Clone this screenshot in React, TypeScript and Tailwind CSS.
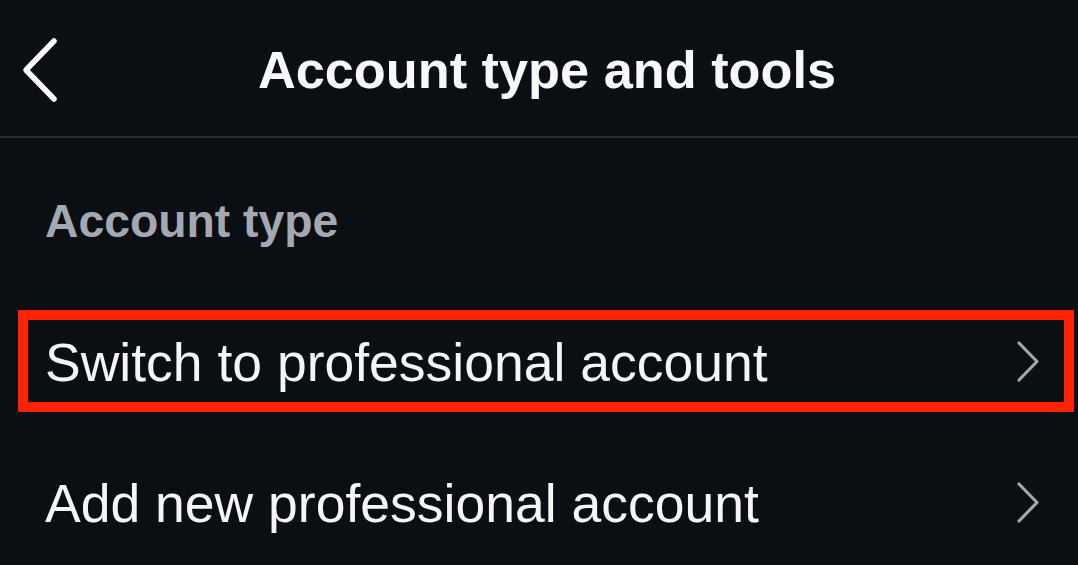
import React from "react";

function ChevronRight() {
  return (
    <svg width="26" height="43" viewBox="0 0 26 43" fill="none" className="shrink-0">
      <path d="M4 3 L22 21.5 L4 40" stroke="#a3a6ac" strokeWidth="3.2" strokeLinecap="round" strokeLinejoin="round" />
    </svg>
  );
}

function Row({ label, highlighted }: { label: string; highlighted?: boolean }) {
  return (
    <div className="relative flex h-[141px] items-center justify-between pl-[45px] pr-[37px]">
      <span className="pt-[3px] text-[53.5px] leading-none text-[#f4f5f7]">{label}</span>
      <ChevronRight />
      {highlighted && (
        <div className="pointer-events-none absolute left-[18px] right-[4px] top-[19px] bottom-[20px] border-[10px] border-[#ff2200]" />
      )}
    </div>
  );
}

export default function App() {
  return (
    <div
      className="h-[565px] w-[1078px] overflow-hidden bg-[#0b0e13]"
      style={{ fontFamily: '"Liberation Sans", Arial, sans-serif' }}
    >
      <div className="relative flex h-[136px] items-center justify-center pl-[16px] pt-[4px]">
        <svg width="44" height="70" viewBox="0 0 44 70" fill="none" className="absolute left-[18px] top-[35px]">
          <path d="M36 6 L8 35 L36 64" stroke="#ffffff" strokeWidth="5.5" strokeLinecap="round" strokeLinejoin="round" />
        </svg>
        <h1 className="text-[52.3px] font-bold leading-none text-[#f7f8fa]">Account type and tools</h1>
      </div>
      <div className="h-[2px] bg-[#2a2d33]" />
      <div className="flex h-[153px] items-center pl-[45px] pt-[14px]">
        <span className="text-[46.3px] font-bold leading-none text-[#a4a8b0]">Account type</span>
      </div>
      <Row label="Switch to professional account" highlighted />
      <Row label="Add new professional account" />
    </div>
  );
}
